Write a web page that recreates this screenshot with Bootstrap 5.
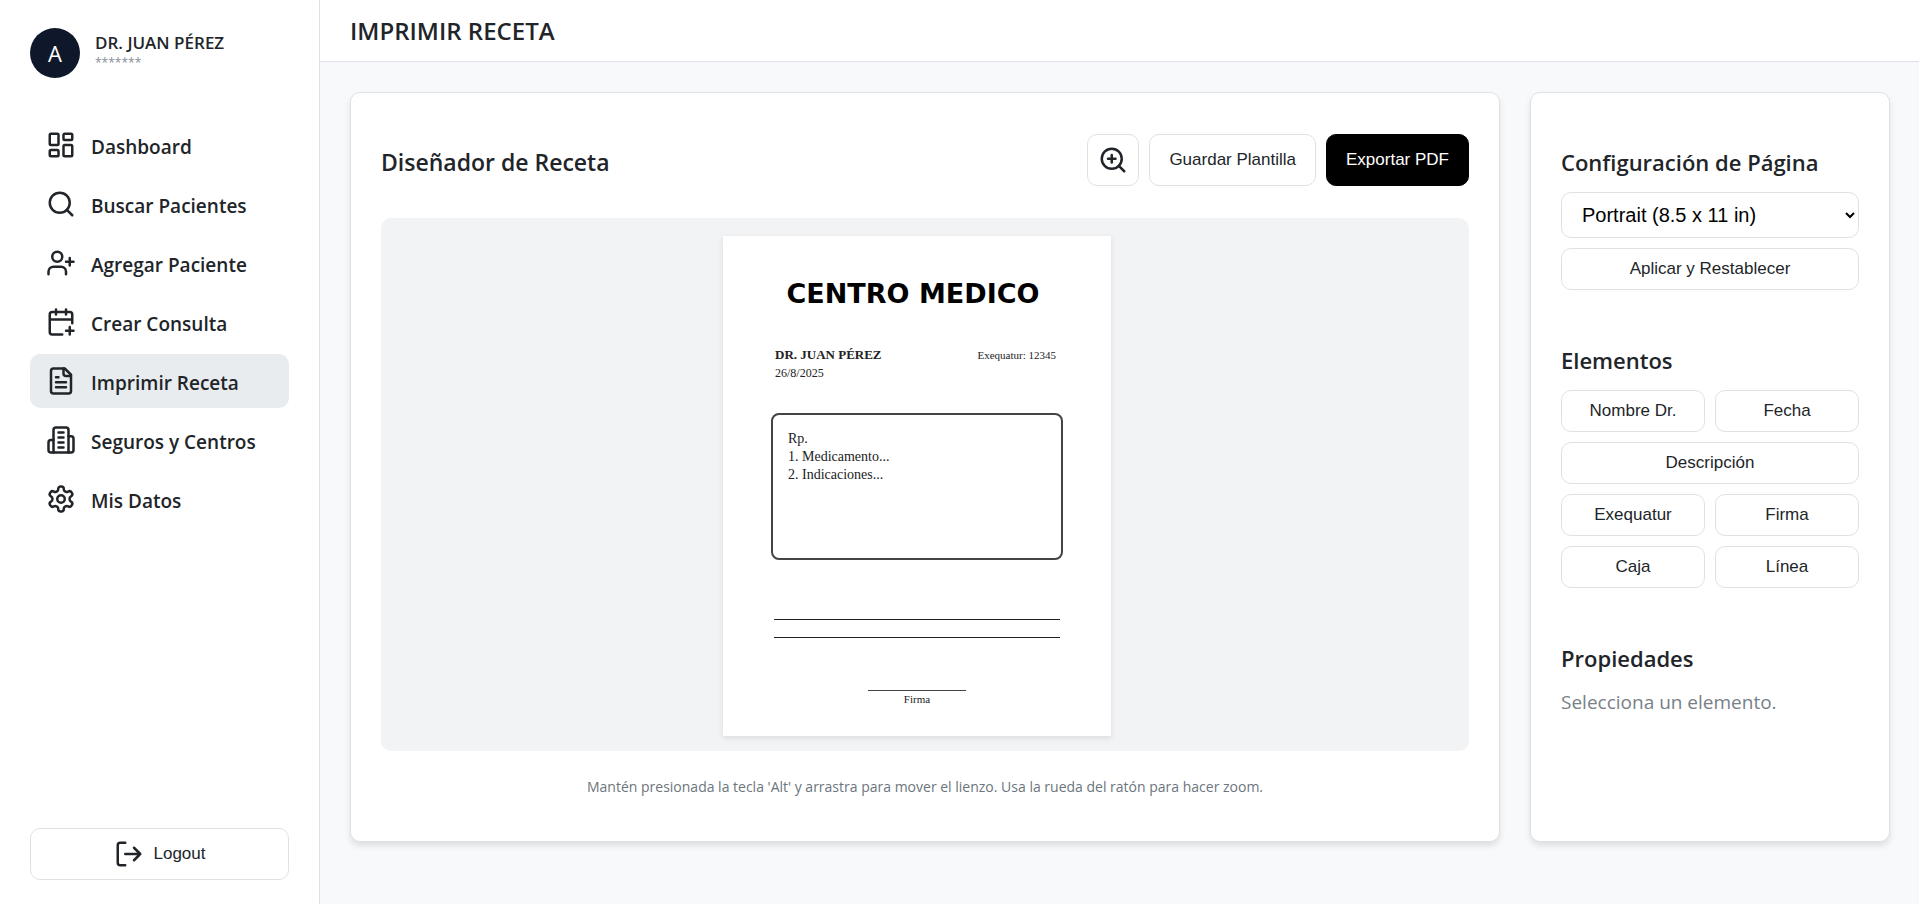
<!DOCTYPE html>
<html lang="es">
<head>
<meta charset="utf-8">
<meta name="viewport" content="width=device-width, initial-scale=1">
<title>Imprimir Receta</title>
<link href="https://cdn.jsdelivr.net/npm/bootstrap@5.3.0/dist/css/bootstrap.min.css" rel="stylesheet">
<style>
  body { font-family: "Open Sans", "Noto Sans", sans-serif; background: #f8f9fb; color: #212529; }
  .icon { width: 30px; height: 30px; flex: none; fill: none; stroke: currentColor; stroke-width: 2; stroke-linecap: round; stroke-linejoin: round; }

  /* Sidebar */
  .sidebar { width: 320px; flex: none; min-height: 100vh; padding: 28px 30px 24px; background: #fff; border-right: 1px solid #dee2e6; }
  .avatar { width: 50px; height: 50px; background: #0f172a; color: #fff; font-size: 22px; }
  .profile { gap: 15px; margin-bottom: 40px; }
  .profile-name { font-size: 17px; line-height: 20px; font-weight: 600; }
  .profile-id { font-size: 12px; line-height: 20px; color: #868e96; }
  .menu { gap: 5px; }
  .menu .nav-link { display: flex; align-items: center; gap: 15px; height: 54px; padding: 0 16px; border-radius: 10px; color: #212529; font-size: 19px; line-height: 28px; font-weight: 600; }
  .menu .nav-link span { padding-top: 4px; }
  .menu .nav-link.active { background: #e9ecef; }

  /* Top bar */
  .topbar { height: 62px; padding: 0 30px; background: #fff; border-bottom: 1px solid #dee2e6; }
  .topbar h1 { font-size: 24px; line-height: 32px; font-weight: 600; }

  /* Panels */
  .workspace { padding: 30px 29px 30px 30px; gap: 30px; }
  .panel { background: #fff; border: 1px solid #dee2e6; border-radius: 10px; box-shadow: 0 4px 6px rgba(0, 0, 0, .1); padding: 41px 30px; min-width: 0; }
  .panel-side { width: 360px; flex: none; padding-top: 46px; }
  .panel h2 { font-size: 23px; line-height: 32px; font-weight: 600; }
  .panel h3 { font-size: 22px; line-height: 30px; font-weight: 600; margin: 0 0 15px; }
  .panel section + section { margin-top: 55px; }

  .btn-tool { --bs-btn-bg: #fff; --bs-btn-color: #212529; --bs-btn-border-color: #dee2e6; --bs-btn-hover-bg: #f1f3f5; --bs-btn-hover-border-color: #dee2e6; --bs-btn-border-radius: 10px; --bs-btn-font-size: 17px; --bs-btn-line-height: 20px; --bs-btn-padding-x: 19px; --bs-btn-padding-y: 10px; font-family: "Liberation Sans", Arial, sans-serif; }
  .btn-main { --bs-btn-bg: #000; --bs-btn-color: #fff; --bs-btn-border-color: #000; --bs-btn-hover-bg: #212529; --bs-btn-hover-color: #fff; }
  .btn-tall { height: 52px; }
  .btn-square { --bs-btn-padding-x: 10px; }
  .page-size { width: 100%; height: 46px; padding: 0 0 0 16px; border: 1px solid #dee2e6; border-radius: 10px; background: #fff; color: #000; font: 20px "Liberation Sans", Arial, sans-serif; }
  .tool-gap { gap: 10px; }
  .tool-grid { grid-template-columns: 1fr 1fr; }
  .tool-wide { grid-column: span 2; }
  .note { font-size: 19px; line-height: 28px; color: #788088; }
  .hint { font-size: 14px; line-height: 22px; color: #6c757d; margin: 25px 0 2px; }

  /* Canvas and sheet */
  .stage { margin-top: 32px; padding: 18px 16px 15px 0; background: #f1f3f5; border-radius: 10px; }
  .sheet { width: 388px; height: 500px; padding: 44px 48px 0; background: #fff; color: #222; box-shadow: 0 2px 6px rgba(0, 0, 0, .1); font-family: "Liberation Serif", "Times New Roman", serif; font-size: 14px; line-height: 18px; }
  .sheet-title { padding-right: 8px; font-family: "DejaVu Sans", Verdana, sans-serif; font-size: 27px; line-height: 28px; font-weight: 700; color: #000; white-space: nowrap; display: flex; justify-content: center; }
  .sheet-head { margin-top: 38px; padding: 0 7px 0 4px; }
  .sheet-name { font-size: 13px; }
  .sheet-date { font-size: 12px; }
  .sheet-lic, .sheet-sign { font-size: 11px; }
  .sheet-box { height: 147px; margin-top: 31px; padding: 15px; border: 2px solid #444; border-radius: 8px; }
  .sheet-rule { height: 1px; background: #222; margin: 59px 3px 0; }
  .sheet-rule + .sheet-rule { margin-top: 17px; }
  .sheet-sign { width: 98px; margin: 52px auto 0; border-top: 1px solid #444; line-height: 16px; }
</style>
</head>
<body>
<div class="d-flex">
  <aside class="sidebar d-flex flex-column">
    <div class="profile d-flex align-items-center">
      <div class="avatar rounded-circle d-flex align-items-center justify-content-center">A</div>
      <div>
        <div class="profile-name">DR. JUAN PÉREZ</div>
        <div class="profile-id">*******</div>
      </div>
    </div>
    <nav class="menu nav flex-column">
      <a class="nav-link" href="#"><svg class="icon" viewBox="0 0 24 24"><rect x="3" y="3" width="7" height="9" rx="1"/><rect x="14" y="3" width="7" height="5" rx="1"/><rect x="14" y="12" width="7" height="9" rx="1"/><rect x="3" y="16" width="7" height="5" rx="1"/></svg><span>Dashboard</span></a>
      <a class="nav-link" href="#"><svg class="icon" viewBox="0 0 24 24"><circle cx="11" cy="11" r="8"/><path d="m21 21-4.3-4.3"/></svg><span>Buscar Pacientes</span></a>
      <a class="nav-link" href="#"><svg class="icon" viewBox="0 0 24 24"><path d="M16 21v-2a4 4 0 0 0-4-4H6a4 4 0 0 0-4 4v2"/><circle cx="9" cy="7" r="4"/><path d="M19 8v6M22 11h-6"/></svg><span>Agregar Paciente</span></a>
      <a class="nav-link" href="#"><svg class="icon" viewBox="0 0 24 24"><path d="M8 2v4M16 2v4M21 13V6a2 2 0 0 0-2-2H5a2 2 0 0 0-2 2v14a2 2 0 0 0 2 2h8M3 10h18M16 19h6M19 16v6"/></svg><span>Crear Consulta</span></a>
      <a class="nav-link active" aria-current="page" href="#"><svg class="icon" viewBox="0 0 24 24"><path d="M15 2H6a2 2 0 0 0-2 2v16a2 2 0 0 0 2 2h12a2 2 0 0 0 2-2V7Z"/><path d="M14 2v4a2 2 0 0 0 2 2h4M10 9H8M16 13H8M16 17H8"/></svg><span>Imprimir Receta</span></a>
      <a class="nav-link" href="#"><svg class="icon" viewBox="0 0 24 24"><path d="M6 22V4a2 2 0 0 1 2-2h8a2 2 0 0 1 2 2v18Z"/><path d="M6 12H4a2 2 0 0 0-2 2v6a2 2 0 0 0 2 2h2M18 9h2a2 2 0 0 1 2 2v9a2 2 0 0 1-2 2h-2M10 6h4M10 10h4M10 14h4M10 18h4"/></svg><span>Seguros y Centros</span></a>
      <a class="nav-link" href="#"><svg class="icon" viewBox="0 0 24 24"><path d="M12.22 2h-.44a2 2 0 0 0-2 2v.18a2 2 0 0 1-1 1.73l-.43.25a2 2 0 0 1-2 0l-.15-.08a2 2 0 0 0-2.73.73l-.22.38a2 2 0 0 0 .73 2.73l.15.1a2 2 0 0 1 1 1.72v.51a2 2 0 0 1-1 1.74l-.15.09a2 2 0 0 0-.73 2.73l.22.38a2 2 0 0 0 2.73.73l.15-.08a2 2 0 0 1 2 0l.43.25a2 2 0 0 1 1 1.73V20a2 2 0 0 0 2 2h.44a2 2 0 0 0 2-2v-.18a2 2 0 0 1 1-1.73l.43-.25a2 2 0 0 1 2 0l.15.08a2 2 0 0 0 2.73-.73l.22-.39a2 2 0 0 0-.73-2.73l-.15-.08a2 2 0 0 1-1-1.74v-.5a2 2 0 0 1 1-1.74l.15-.09a2 2 0 0 0 .73-2.73l-.22-.38a2 2 0 0 0-2.73-.73l-.15.08a2 2 0 0 1-2 0l-.43-.25a2 2 0 0 1-1-1.73V4a2 2 0 0 0-2-2z"/><circle cx="12" cy="12" r="3"/></svg><span>Mis Datos</span></a>
    </nav>
    <button type="button" class="btn btn-tool btn-tall tool-gap d-flex align-items-center justify-content-center mt-auto"><svg class="icon" viewBox="0 0 24 24"><path d="M9 21H5a2 2 0 0 1-2-2V5a2 2 0 0 1 2-2h4M16 17l5-5-5-5M21 12H9"/></svg>Logout</button>
  </aside>

  <div class="flex-grow-1">
    <header class="topbar d-flex align-items-center"><h1 class="m-0">IMPRIMIR RECETA</h1></header>

    <main class="workspace d-flex">
      <div class="panel flex-grow-1">
        <div class="d-flex align-items-center justify-content-between">
          <h2 class="m-0 pt-1">Diseñador de Receta</h2>
          <div class="d-flex tool-gap">
            <button type="button" class="btn btn-tool btn-tall btn-square d-flex" aria-label="Acercar"><svg class="icon" viewBox="0 0 24 24"><circle cx="11" cy="11" r="8"/><path d="m21 21-4.35-4.35M11 8v6M8 11h6"/></svg></button>
            <button type="button" class="btn btn-tool btn-tall">Guardar Plantilla</button>
            <button type="button" class="btn btn-tool btn-tall btn-main">Exportar PDF</button>
          </div>
        </div>
        <div class="stage d-flex justify-content-center">
          <div class="sheet">
            <div class="sheet-title">CENTRO MEDICO</div>
            <div class="sheet-head d-flex justify-content-between">
              <div>
                <div class="sheet-name fw-bold">DR. JUAN PÉREZ</div>
                <div class="sheet-date">26/8/2025</div>
              </div>
              <div class="sheet-lic">Exequatur: 12345</div>
            </div>
            <div class="sheet-box">Rp.<br>1. Medicamento...<br>2. Indicaciones...</div>
            <div class="sheet-rule"></div>
            <div class="sheet-rule"></div>
            <div class="sheet-sign text-center">Firma</div>
          </div>
        </div>
        <p class="hint text-center">Mantén presionada la tecla 'Alt' y arrastra para mover el lienzo. Usa la rueda del ratón para hacer zoom.</p>
      </div>

      <div class="panel panel-side">
        <section>
          <h3 class="pt-2"><label for="page-size">Configuración de Página</label></h3>
          <div class="d-grid tool-gap">
            <select id="page-size" class="page-size"><option>Portrait (8.5 x 11 in)</option><option>Landscape (11 x 8.5 in)</option></select>
            <button type="button" class="btn btn-tool">Aplicar y Restablecer</button>
          </div>
        </section>
        <section>
          <h3>Elementos</h3>
          <div class="tool-grid d-grid tool-gap">
            <button type="button" class="btn btn-tool">Nombre Dr.</button>
            <button type="button" class="btn btn-tool">Fecha</button>
            <button type="button" class="btn btn-tool tool-wide">Descripción</button>
            <button type="button" class="btn btn-tool">Exequatur</button>
            <button type="button" class="btn btn-tool">Firma</button>
            <button type="button" class="btn btn-tool">Caja</button>
            <button type="button" class="btn btn-tool">Línea</button>
          </div>
        </section>
        <section>
          <h3>Propiedades</h3>
          <p class="note m-0">Selecciona un elemento.</p>
        </section>
      </div>
    </main>
  </div>
</div>
<script src="https://cdn.jsdelivr.net/npm/bootstrap@5.3.0/dist/js/bootstrap.bundle.min.js"></script>
</body>
</html>
